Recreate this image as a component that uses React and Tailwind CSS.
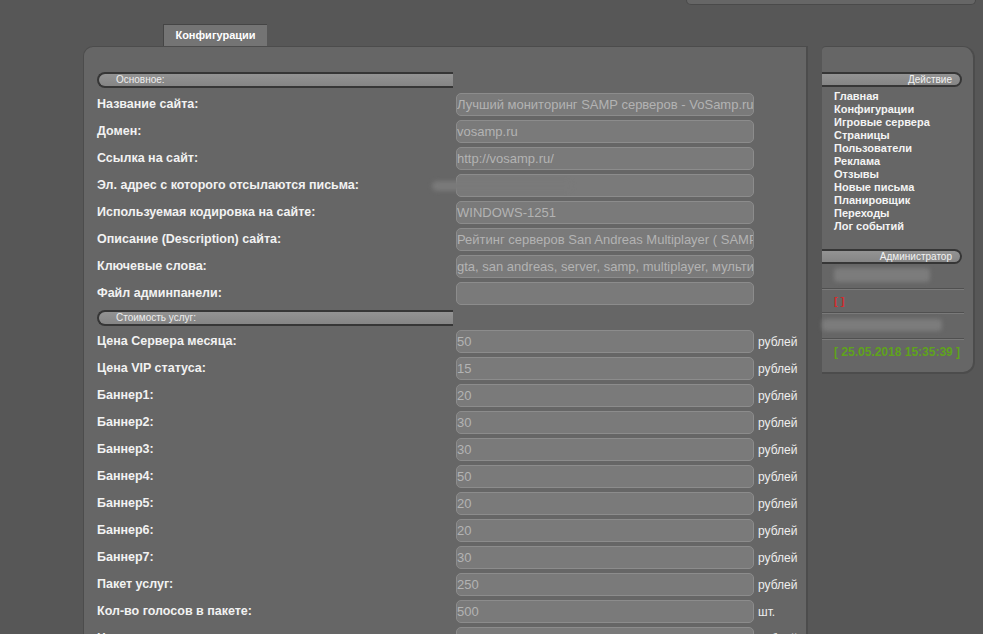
import React from 'react';

const basic = [
    ['Название сайта:', 'Лучший мониторинг SAMP серверов - VoSamp.ru'],
    ['Домен:', 'vosamp.ru'],
    ['Ссылка на сайт:', 'http://vosamp.ru/'],
    ['Эл. адрес с которого отсылаются письма:', ''],
    ['Используемая кодировка на сайте:', 'WINDOWS-1251'],
    ['Описание (Description) сайта:', 'Рейтинг серверов San Andreas Multiplayer ( SAMP )'],
    ['Ключевые слова:', 'gta, san andreas, server, samp, multiplayer, мультиплеер'],
    ['Файл админпанели:', ''],
];

const prices = [
    ['Цена Сервера месяца:', '50', 'рублей'],
    ['Цена VIP статуса:', '15', 'рублей'],
    ['Баннер1:', '20', 'рублей'],
    ['Баннер2:', '30', 'рублей'],
    ['Баннер3:', '30', 'рублей'],
    ['Баннер4:', '50', 'рублей'],
    ['Баннер5:', '20', 'рублей'],
    ['Баннер6:', '20', 'рублей'],
    ['Баннер7:', '30', 'рублей'],
    ['Пакет услуг:', '250', 'рублей'],
    ['Кол-во голосов в пакете:', '500', 'шт.'],
    ['Цена за голос:', '1', 'рублей'],
];

const menu = [
    'Главная', 'Конфигурации', 'Игровые сервера', 'Страницы', 'Пользователи',
    'Реклама', 'Отзывы', 'Новые письма', 'Планировщик', 'Переходы', 'Лог событий',
];

const SectionBar = ({ title, className = '' }) => (
    <div className={`w-[356px] h-[16px] rounded-l-full border-2 border-r-0 border-[#363636] bg-gradient-to-b from-[#939393] to-[#858585] flex items-center pl-[17px] text-[10px] text-[#eeeeee] leading-none ${className}`}>
        {title}
    </div>
);

const Field = ({ value }) => (
    <div className="w-[298px] h-[23px] rounded-[5px] border border-[#8c8c8c] bg-[#7a7a7a] flex items-center overflow-hidden whitespace-nowrap text-[13px] text-[#b3b3b3]">
        {value}
    </div>
);

const Row = ({ label, value, unit }) => (
    <div className="flex items-center h-[27px]">
        <div className="w-[359px] font-bold text-[12.5px] text-[#f2f2f2]">{label}</div>
        <Field value={value} />
        {unit && <div className="ml-[4px] text-[12px] text-[#eeeeee]">{unit}</div>}
    </div>
);

const Separator = () => (
    <div className="h-[2px] w-[142px] border-t border-[#505050] border-b-[#7a7a7a] border-b" />
);

export default function App() {
    return (
        <div
            className="w-[983px] h-[634px] bg-[#575757] overflow-hidden relative"
            style={{ fontFamily: '"Liberation Sans", Arial, sans-serif' }}
        >
            <div className="ml-[686px] w-[290px] h-[5px] bg-[#666666] border border-t-0 border-[#4a4a4a] rounded-b-[7px]" />

            <div className="ml-[163px] mt-[19px] w-[104px] h-[22px] bg-[#747474] border-t border-l border-[#454545] flex items-center justify-center font-bold text-[11px] text-white">
                Конфигурации
            </div>

            <div className="flex items-start">
                <div className="ml-[83px] w-[725px] h-[600px] bg-[#666666] rounded-tl-[10px] border-t border-l border-r-2 border-[#4c4c4c] pl-[13px] pt-[25px]">
                    <SectionBar title="Основное:" />
                    <div className="mt-[3px]">
                        {basic.map(([l, v]) => (
                            <Row key={l} label={l} value={v} />
                        ))}
                    </div>
                    <SectionBar title="Стоимость услуг:" className="mt-[3px]" />
                    <div className="mt-[2px]">
                        {prices.map(([l, v, u]) => (
                            <Row key={l} label={l} value={v} unit={u} />
                        ))}
                    </div>
                </div>

                <div className="ml-[14px] w-[153px] h-[328px] bg-[#666666] rounded-tl-[4px] rounded-tr-[12px] rounded-br-[12px] border-t border-r-2 border-b-2 border-[#4c4c4c] pt-[25px]">
                    <div className="w-[140px] h-[15px] rounded-r-full border-2 border-l-0 border-[#363636] bg-gradient-to-b from-[#939393] to-[#858585] flex items-center justify-end pr-[8px] text-[10px] text-[#f2f2f2] leading-none">
                        Действие
                    </div>
                    <div className="mt-[3px] pl-[12px]">
                        {menu.map(m => (
                            <div key={m} className="h-[13px] leading-[13px] font-bold text-[11px] text-[#f4f4f4]">{m}</div>
                        ))}
                    </div>
                    <div className="mt-[16px] w-[140px] h-[15px] rounded-r-full border-2 border-l-0 border-[#363636] bg-gradient-to-b from-[#939393] to-[#858585] flex items-center justify-end pr-[8px] text-[10px] text-[#f2f2f2] leading-none">
                        Администратор
                    </div>
                    <div className="h-[24px] relative">
                        <div className="absolute left-[12px] top-[4px] w-[96px] h-[14px] bg-[#7c7c7c] blur-[2px] rounded" />
                    </div>
                    <Separator />
                    <div className="h-[22px] pl-[12px] flex items-center font-bold text-[11px] text-[#d42a2a]">[ ]</div>
                    <Separator />
                    <div className="h-[24px] relative">
                        <div className="absolute left-[0px] top-[5px] w-[120px] h-[12px] bg-[#7c7c7c] blur-[2px] rounded" />
                    </div>
                    <Separator />
                    <div className="h-[24px] pl-[12px] flex items-center font-bold text-[12px] text-[#5fa31c] whitespace-nowrap">
                        [ 25.05.2018 15:35:39 ]
                    </div>
                </div>
            </div>

            <div className="absolute left-[432px] top-[181px] w-[140px] h-[10px] bg-[#7a7a7a] blur-[2px] rounded-full" />
        </div>
    );
}
